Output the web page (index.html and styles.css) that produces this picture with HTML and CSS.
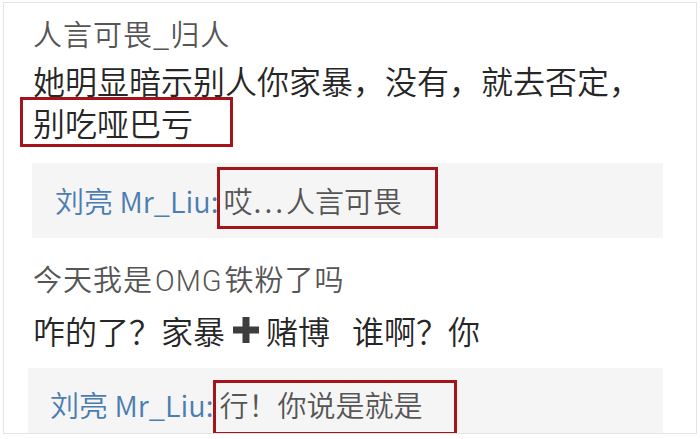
FILE: index.html
```html
<!DOCTYPE html>
<html lang="zh-CN">
<head>
<meta charset="utf-8">
<link rel="stylesheet" href="styles.css">
</head>
<body>
<div class="card">
  <div class="user user-a">人言可畏_归人</div>
  <div class="text text-a">她明显暗示别人你家暴，没有，就去否定，</div>
  <div class="markline"><span class="mark mark-a">别吃哑巴亏</span></div>
  <div class="reply reply-a">
    <span class="name name-a">刘亮 Mr_Liu:</span><span class="mark mark-b">哎<span class="dots">...</span>人言可畏</span>
  </div>
  <div class="user user-b">今天我是<span class="latin">OMG</span>铁粉了吗</div>
  <div class="text text-b">咋的了？家暴<svg class="plus" viewBox="0 0 30 30" width="30" height="30"><path d="M11.5 2h7v9.5H28v7h-9.5V28h-7v-9.5H2v-7h9.5z" fill="#3d3d3d"/></svg>赌博<span class="gap"></span>谁啊？你</div>
  <div class="reply reply-b">
    <span class="name name-b">刘亮 Mr_Liu:</span><span class="mark mark-c">行！你说是就是</span>
  </div>
</div>
</body>
</html>
```

FILE: styles.css
```css
html, body {
  margin: 0;
  padding: 0;
  background: #ffffff;
}

body {
  font-family: "Noto Sans CJK SC", "Noto Sans", sans-serif;
  font-weight: 350;
  width: 700px;
  height: 439px;
  overflow: hidden;
}

.card {
  box-sizing: border-box;
  width: 694px;
  height: 432px;
  margin: 2px 0 0 3px;
  padding: 15px 0 0 29px;
  border: 1px solid #e4e4e4;
  overflow: hidden;
}

.user {
  font-size: 29px;
  line-height: 30px;
  color: #555555;
  letter-spacing: 1px;
  white-space: nowrap;
}

.latin {
  font-family: "Roboto", "Noto Sans", sans-serif;
  font-weight: 300;
  letter-spacing: 1px;
  margin: 0 2px;
}

.text {
  font-size: 32px;
  line-height: 40px;
  color: #262626;
  white-space: nowrap;
}

.text-a {
  margin-top: 12px;
}

.markline {
  display: flex;
  margin-top: -3px;
}

.mark {
  box-sizing: border-box;
  border: 3px solid #a3151b;
  white-space: nowrap;
}

.mark-a {
  font-size: 32px;
  line-height: 40px;
  color: #262626;
  padding: 2px 37px 2px 10px;
  margin-left: -13px;
}

.reply {
  display: flex;
  align-items: flex-start;
  background: #f5f5f5;
  box-sizing: border-box;
}

.reply-a {
  margin-top: 16px;
  margin-left: -1px;
  width: 631px;
  height: 75px;
  padding-left: 23px;
}

.reply-b {
  margin-top: 18px;
  margin-left: -5px;
  width: 635px;
  height: 65px;
  padding-left: 22px;
  overflow: visible;
}

.name {
  font-size: 29px;
  line-height: 40px;
  color: #4b7db2;
  white-space: nowrap;
}

.name-a {
  margin-top: 17px;
}

.name-b {
  margin-top: 16px;
}

.mark-b {
  font-size: 29px;
  line-height: 40px;
  color: #555555;
  margin-top: 4px;
  margin-left: -2px;
  padding: 10px 33px 6px 4px;
}

.dots {
  letter-spacing: 3px;
  margin-left: 1px;
}

.mark-c {
  font-size: 29px;
  line-height: 40px;
  color: #555555;
  margin-top: 12px;
  margin-left: -1px;
  padding: 1px 31px 8px 4px;
}

.user-b {
  margin-top: 25px;
}

.text-b {
  margin-top: 14px;
  display: flex;
  align-items: center;
}

.plus {
  margin: 0 5px 0 6px;
}

.gap {
  display: inline-block;
  width: 22px;
}
```
